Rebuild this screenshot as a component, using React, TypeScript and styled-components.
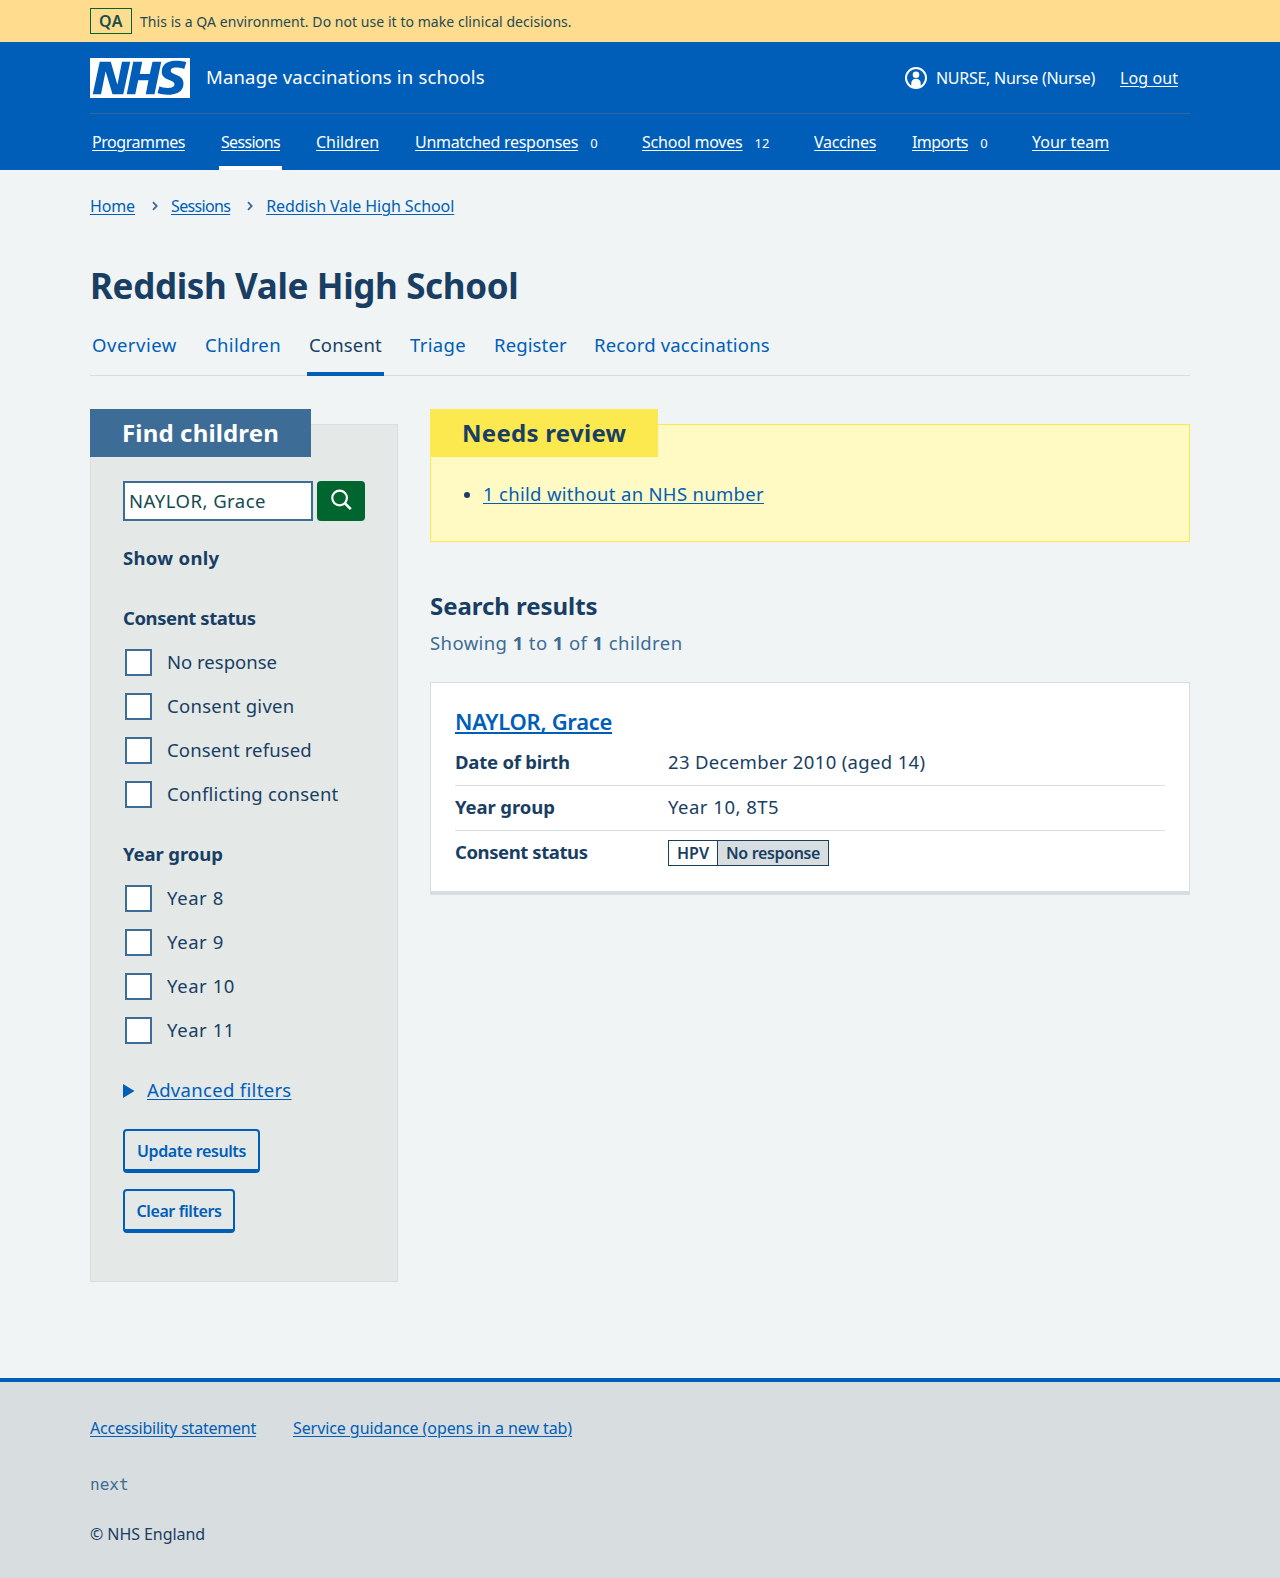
import React from "react";
import styled, { createGlobalStyle, css } from "styled-components";

const blue = "#005eb8";
const navy = "#193e63";
const slate = "#3d6c96";
const green = "#00662f";
const line = "#d8dde0";

type Tracked = { $track?: number };
const track = css<Tracked>`
  letter-spacing: ${(p) => p.$track ?? 0}px;
  white-space: nowrap;
`;
const underline = css`
  text-decoration: underline;
  text-decoration-thickness: 1px;
  text-underline-offset: 2px;
`;

const GlobalStyle = createGlobalStyle`
  *, *::before, *::after { box-sizing: border-box; }
  body {
    margin: 0;
    background: #f0f4f5;
    color: ${navy};
    font-family: "Noto Sans", "Open Sans", sans-serif;
    font-size: 18.5px;
    line-height: 28px;
  }
  h1, h2, h3, h4, p, ul, ol, dl, dd, fieldset { margin: 0; padding: 0; border: 0; }
  ul, ol { list-style: none; }
  a { color: inherit; }
`;

const Container = styled.div`
  width: 1100px;
  margin: 0 auto;
`;

/* Environment banner */
const Banner = styled.div`
  height: 42px;
  background: #ffdc8e;
`;
const BannerInner = styled(Container)`
  height: 42px;
  display: flex;
  align-items: center;
  gap: 8px;
`;
const EnvTag = styled.strong<Tracked>`
  width: 42px;
  height: 26px;
  border: 1px solid ${green};
  font-size: 16px;
  font-weight: 600;
  line-height: 25px;
  text-align: center;
  color: #174f4c;
  ${track}
`;
const EnvText = styled.span<Tracked>`
  padding-top: 2px;
  font-size: 14px;
  line-height: 20px;
  color: #1d4a55;
  ${track}
`;

/* Header */
const Header = styled.header`
  background: ${blue};
  color: #fff;
`;
const HeaderTop = styled(Container)`
  height: 72px;
  display: flex;
  align-items: center;
  border-bottom: 1px solid #3468a3;
`;
const Logo = styled.svg`
  width: 100px;
  height: 40px;
  display: block;
`;
const ServiceName = styled.span<Tracked>`
  margin: 0 auto 2px 16px;
  ${track}
`;
const Account = styled.div`
  display: flex;
  align-items: center;
  padding-right: 12px;
  font-size: 16px;
  line-height: 24px;
`;
const AccountName = styled.span<Tracked>`
  margin: 0 25px 0 9px;
  ${track}
`;
const AccountLink = styled.a<Tracked>`
  ${underline}
  ${track}
`;
const Nav = styled.nav`
  height: 56px;
`;
const NavList = styled.ul`
  height: 56px;
  display: flex;
  gap: 32px;
`;
const NavItem = styled.li<{ $active?: boolean }>`
  display: flex;
  padding: 16px 2px;
  font-size: 16px;
  line-height: 24px;
  box-shadow: ${(p) => (p.$active ? "inset 0 -4px #fff" : "none")};
`;
const NavLink = styled.a<Tracked & { $width: number }>`
  width: ${(p) => p.$width}px;
  ${underline}
  ${track}
`;
const Count = styled.span<{ $wide?: boolean }>`
  width: ${(p) => (p.$wide ? 32 : 24)}px;
  margin-left: 4px;
  font-size: 13px;
  line-height: 26px;
  text-align: center;
`;

/* Page heading area */
const Page = styled(Container)`
  padding-bottom: 96px;
`;
const Breadcrumbs = styled.ol`
  display: flex;
  align-items: center;
  padding-top: 24px;
  font-size: 16px;
  line-height: 24px;
  color: ${blue};
`;
const Crumb = styled.li`
  display: flex;
  align-items: center;
`;
const CrumbLink = styled.a<Tracked>`
  ${underline}
  ${track}
`;
const Chevron = styled.svg`
  width: 6px;
  height: 10px;
  margin: 0 13px 0 17px;
`;
const Title = styled.h1<Tracked>`
  margin-top: 46px;
  font-size: 35px;
  font-weight: 700;
  line-height: 44px;
  ${track}
`;
const Tabs = styled.ul`
  display: flex;
  gap: 24px;
  margin-top: 15px;
  box-shadow: inset 0 -1px ${line};
`;
const Tab = styled.li<Tracked & { $active?: boolean; $width: number }>`
  width: ${(p) => p.$width}px;
  padding: 8px 2px 17px;
  color: ${(p) => (p.$active ? navy : blue)};
  box-shadow: ${(p) => (p.$active ? `inset 0 -4px ${blue}` : "none")};
  ${track}
`;
const Columns = styled.div`
  display: grid;
  grid-template-columns: 308px 760px;
  gap: 32px;
  align-items: start;
  margin-top: 33px;
`;

/* Panels with an overhanging heading */
const Panel = styled.section<{ $warning?: boolean }>`
  margin-top: 15px;
  padding: 0 32px ${(p) => (p.$warning ? 33 : 48)}px;
  border: 1px solid ${(p) => (p.$warning ? "#fbe94f" : line)};
  background: ${(p) => (p.$warning ? "#fff9c4" : "#e4e9e8")};
`;
const PanelTitle = styled.h2<Tracked & { $warning?: boolean }>`
  width: ${(p) => (p.$warning ? 228 : 221)}px;
  margin: -16px 0 0 -33px;
  padding: 0 32px;
  font-size: 24px;
  font-weight: 700;
  line-height: 48px;
  color: ${(p) => (p.$warning ? navy : "#fff")};
  background: ${(p) => (p.$warning ? "#fbe94f" : slate)};
  ${track}
`;
const SearchRow = styled.div`
  display: flex;
  gap: 4px;
  margin-top: 24px;
`;
const SearchInput = styled.input<Tracked>`
  width: 190px;
  height: 40px;
  padding: 0 4px 2px;
  border: 2px solid ${slate};
  border-radius: 0;
  background: #fff;
  color: #154a50;
  font: inherit;
  ${track}
`;
const SearchButton = styled.button`
  width: 48px;
  height: 40px;
  padding: 0;
  border: 0;
  border-radius: 4px;
  background: ${green};
  display: flex;
  align-items: center;
  justify-content: center;
`;
const GroupTitle = styled.h3<Tracked & { $top: number }>`
  margin-top: ${(p) => p.$top}px;
  font-size: 18.5px;
  font-weight: 700;
  line-height: 28px;
  ${track}
`;
const Options = styled.div`
  display: flex;
  flex-direction: column;
  gap: 16px;
  margin-top: 16px;
`;
const Option = styled.label<Tracked>`
  display: flex;
  height: 28px;
  gap: 15px;
  padding-left: 2px;
  ${track}
`;
const Checkbox = styled.input`
  appearance: none;
  width: 27px;
  height: 27px;
  margin: 1px 0 0;
  border: 2px solid ${slate};
  background: #fff;
`;
const Advanced = styled.div<Tracked>`
  display: flex;
  align-items: center;
  gap: 12px;
  margin-top: 32px;
  color: ${blue};
  ${track}
`;
const Triangle = styled.svg`
  width: 12px;
  height: 14px;
  margin-top: 2px;
`;
const AdvancedText = styled.span`
  ${underline}
`;
const Buttons = styled.div`
  display: flex;
  flex-direction: column;
  gap: 16px;
  margin-top: 25px;
`;
const Button = styled.button<Tracked & { $width: number }>`
  width: ${(p) => p.$width}px;
  height: 44px;
  padding: 1px 0 0;
  border: 2px solid ${blue};
  border-bottom-width: 4px;
  border-radius: 4px;
  background: transparent;
  color: ${blue};
  font: 600 16px/24px "Noto Sans", "Open Sans", sans-serif;
  ${track}
`;

/* Results */
const Issue = styled.li`
  display: flex;
  align-items: center;
  margin-top: 23px;
`;
const Bullet = styled.span`
  width: 6px;
  height: 6px;
  margin: 2px 13px 0 1px;
  border-radius: 50%;
  background: ${navy};
`;
const IssueLink = styled.a<Tracked>`
  color: ${blue};
  ${underline}
  ${track}
`;
const ResultsTitle = styled.h2<Tracked>`
  margin-top: 48px;
  font-size: 24px;
  font-weight: 700;
  line-height: 32px;
  ${track}
`;
const ResultsCount = styled.p<Tracked>`
  margin-top: 7px;
  color: ${slate};
  ${track}
  b { font-weight: 700; }
`;
const Card = styled.article`
  margin-top: 25px;
  padding: 22px 24px 16px;
  border: 1px solid ${line};
  border-bottom-width: 4px;
  background: #fff;
`;
const CardTitle = styled.h3<Tracked>`
  margin-bottom: 3px;
  font-size: 22px;
  font-weight: 600;
  line-height: 32px;
  color: ${blue};
  ${track}
  a {
    text-decoration: underline;
    text-decoration-thickness: 2px;
    text-underline-offset: 2px;
    text-decoration-skip-ink: none;
  }
`;
const Row = styled.div`
  display: grid;
  grid-template-columns: 213px 1fr;
  height: 45px;
  padding-top: 7px;
  border-bottom: 1px solid ${line};
  &:first-child { height: 46px; padding-top: 8px; }
  &:last-child { height: 44px; border-bottom: 0; }
`;
const Key = styled.dt<Tracked>`
  font-weight: 700;
  ${track}
`;
const Value = styled.dd<Tracked>`
  ${track}
`;
const Status = styled.span`
  display: flex;
  width: 161px;
  height: 26px;
  margin-top: 2px;
  border: 1px solid ${navy};
  font-size: 16px;
  font-weight: 600;
  line-height: 24px;
`;
const StatusPart = styled.span<Tracked & { $grey?: boolean; $width: number }>`
  width: ${(p) => p.$width}px;
  padding-left: 8px;
  background: ${(p) => (p.$grey ? line : "#fff")};
  border-left: ${(p) => (p.$grey ? `1px solid ${navy}` : "0")};
  ${track}
`;

/* Footer */
const Footer = styled.footer`
  height: 200px;
  padding-top: 34px;
  border-top: 4px solid ${blue};
  background: #d8dde0;
  font-size: 16px;
  line-height: 24px;
`;
const FooterLinks = styled.ul`
  display: flex;
  gap: 37px;
  color: ${blue};
`;
const FooterLink = styled.a<Tracked>`
  ${underline}
  ${track}
`;
const Version = styled.p`
  margin-top: 33px;
  font-family: "DejaVu Sans Mono", monospace;
  color: ${slate};
`;
const Copyright = styled.p<Tracked>`
  margin-top: 25px;
  ${track}
`;

const navItems = [
  { label: "Programmes", track: -0.44, width: 93 },
  { label: "Sessions", track: -0.69, width: 59, active: true },
  { label: "Children", track: -0.04, width: 63 },
  { label: "Unmatched responses", track: -0.29, width: 163, count: "0" },
  { label: "School moves", track: -0.22, width: 100, count: "12" },
  { label: "Vaccines", track: -0.29, width: 62 },
  { label: "Imports", track: -0.57, width: 56, count: "0" },
  { label: "Your team", track: -0.03, width: 77 },
];
const tabs = [
  { label: "Overview", track: 0.52, width: 89 },
  { label: "Children", track: 0.34, width: 80 },
  { label: "Consent", track: 0.16, width: 77, active: true },
  { label: "Triage", track: 0.34, width: 60 },
  { label: "Register", track: 0.13, width: 76 },
  { label: "Record vaccinations", track: 0.17, width: 181 },
];
const consentOptions = [
  { label: "No response", track: 0 },
  { label: "Consent given", track: 0.27 },
  { label: "Consent refused", track: 0.14 },
  { label: "Conflicting consent", track: 0.23 },
];
const yearOptions = ["Year 8", "Year 9", "Year 10", "Year 11"].map((label) => ({ label, track: 0.58 }));

const CrumbChevron = () => (
  <Chevron viewBox="0 0 6 10" aria-hidden="true">
    <path d="M1 1.2 4.7 5 1 8.8" fill="none" stroke={slate} strokeWidth="1.8" />
  </Chevron>
);

const OptionGroup = ({ options }: { options: { label: string; track: number }[] }) => (
  <Options>
    {options.map((o) => (
      <Option key={o.label} $track={o.track}>
        <Checkbox type="checkbox" />
        {o.label}
      </Option>
    ))}
  </Options>
);

export default function App() {
  return (
    <>
      <GlobalStyle />
      <Banner>
        <BannerInner>
          <EnvTag $track={0.4}>QA</EnvTag>
          <EnvText $track={0.05}>This is a QA environment. Do not use it to make clinical decisions.</EnvText>
        </BannerInner>
      </Banner>

      <Header>
        <HeaderTop>
          <Logo viewBox="0 0 40 16" role="img" aria-label="NHS">
            <path fill="#fff" d="M0 0h40v16H0z" />
            <path
              fill={blue}
              d="M3.9 1.5h4.4l2.6 9h.1l1.8-9h3.3l-2.8 13H9l-2.7-9h-.1l-1.8 9H1.1M17.3 1.5h3.6l-1 4.9h4L25 1.5h3.5l-2.7 13h-3.5l1.1-5.6h-4.1l-1.2 5.6h-3.4M37.7 4.4c-.7-.3-1.6-.6-2.9-.6-1.4 0-2.5.2-2.5 1.3 0 1.8 5.1 1.2 5.1 5.1 0 3.6-3.3 4.5-6.4 4.5-1.3 0-2.9-.3-4-.7l.8-2.7c.7.4 2.1.7 3.2.7s2.8-.2 2.8-1.5c0-2.1-5.1-1.3-5.1-5 0-3.4 2.9-4.4 5.8-4.4 1.6 0 3.1.2 4 .6"
            />
          </Logo>
          <ServiceName $track={0.17}>Manage vaccinations in schools</ServiceName>
          <Account>
            <svg width="22" height="22" viewBox="0 0 22 22" aria-hidden="true">
              <circle cx="11" cy="11" r="10" fill="none" stroke="#fff" strokeWidth="2" />
              <circle cx="11" cy="7.8" r="3.3" fill="#fff" />
              <path fill="#fff" d="M6.3 20v-4c0-2.6 1.9-4.2 4.7-4.2s4.7 1.6 4.7 4.2v4a10 10 0 0 1-9.4 0z" />
            </svg>
            <AccountName $track={-0.27}>NURSE, Nurse (Nurse)</AccountName>
            <AccountLink $track={0.09}>Log out</AccountLink>
          </Account>
        </HeaderTop>
        <Container>
          <Nav>
            <NavList>
              {navItems.map((n) => (
                <NavItem key={n.label} $active={n.active}>
                  <NavLink $track={n.track} $width={n.width}>{n.label}</NavLink>
                  {n.count && <Count $wide={n.count.length > 1}>{n.count}</Count>}
                </NavItem>
              ))}
            </NavList>
          </Nav>
        </Container>
      </Header>

      <Page>
        <Breadcrumbs>
          <Crumb><CrumbLink $track={-0.13}>Home</CrumbLink></Crumb>
          <Crumb><CrumbChevron /><CrumbLink $track={-0.67}>Sessions</CrumbLink></Crumb>
          <Crumb><CrumbChevron /><CrumbLink $track={-0.07}>Reddish Vale High School</CrumbLink></Crumb>
        </Breadcrumbs>
        <Title $track={-0.36}>Reddish Vale High School</Title>
        <Tabs>
          {tabs.map((t) => (
            <Tab key={t.label} $track={t.track} $width={t.width} $active={t.active}>{t.label}</Tab>
          ))}
        </Tabs>

        <Columns>
          <Panel>
            <PanelTitle $track={0.15}>Find children</PanelTitle>
            <SearchRow>
              <SearchInput $track={0.48} defaultValue="NAYLOR, Grace" />
              <SearchButton aria-label="Search">
                <svg width="24" height="24" viewBox="0 0 24 24" fill="none" stroke="#fff" strokeWidth="2.2">
                  <circle cx="10.6" cy="9" r="7.3" />
                  <path d="m15.8 14.2 6 6" strokeWidth="2.6" />
                </svg>
              </SearchButton>
            </SearchRow>
            <GroupTitle $top={23} $track={0.3}>Show only</GroupTitle>
            <GroupTitle $top={32} $track={-0.42}>Consent status</GroupTitle>
            <OptionGroup options={consentOptions} />
            <GroupTitle $top={32} $track={-0.1}>Year group</GroupTitle>
            <OptionGroup options={yearOptions} />
            <Advanced $track={0.32}>
              <Triangle viewBox="0 0 12 14" aria-hidden="true">
                <path d="M0 0l11.5 7L0 14z" fill={blue} />
              </Triangle>
              <AdvancedText>Advanced filters</AdvancedText>
            </Advanced>
            <Buttons>
              <Button $track={-0.39} $width={137}>Update results</Button>
              <Button $track={-0.41} $width={112}>Clear filters</Button>
            </Buttons>
          </Panel>

          <main>
            <Panel $warning>
              <PanelTitle $warning $track={0.28}>Needs review</PanelTitle>
              <ul>
                <Issue>
                  <Bullet />
                  <IssueLink $track={0.31}>1 child without an NHS number</IssueLink>
                </Issue>
              </ul>
            </Panel>
            <ResultsTitle $track={-0.05}>Search results</ResultsTitle>
            <ResultsCount $track={0.41}>
              Showing <b>1</b> to <b>1</b> of <b>1</b> children
            </ResultsCount>
            <Card>
              <CardTitle $track={-0.3}><a>NAYLOR, Grace</a></CardTitle>
              <dl>
                <Row>
                  <Key $track={-0.22}>Date of birth</Key>
                  <Value $track={0.34}>23 December 2010 (aged 14)</Value>
                </Row>
                <Row>
                  <Key $track={-0.1}>Year group</Key>
                  <Value $track={0.5}>Year 10, 8T5</Value>
                </Row>
                <Row>
                  <Key $track={-0.42}>Consent status</Key>
                  <Value>
                    <Status>
                      <StatusPart $track={0} $width={48}>HPV</StatusPart>
                      <StatusPart $grey $track={-0.35} $width={111}>No response</StatusPart>
                    </Status>
                  </Value>
                </Row>
              </dl>
            </Card>
          </main>
        </Columns>
      </Page>

      <Footer>
        <Container>
          <FooterLinks>
            <li><FooterLink $track={-0.23}>Accessibility statement</FooterLink></li>
            <li><FooterLink $track={-0.08}>Service guidance (opens in a new tab)</FooterLink></li>
          </FooterLinks>
          <Version>next</Version>
          <Copyright $track={-0.07}>© NHS England</Copyright>
        </Container>
      </Footer>
    </>
  );
}
